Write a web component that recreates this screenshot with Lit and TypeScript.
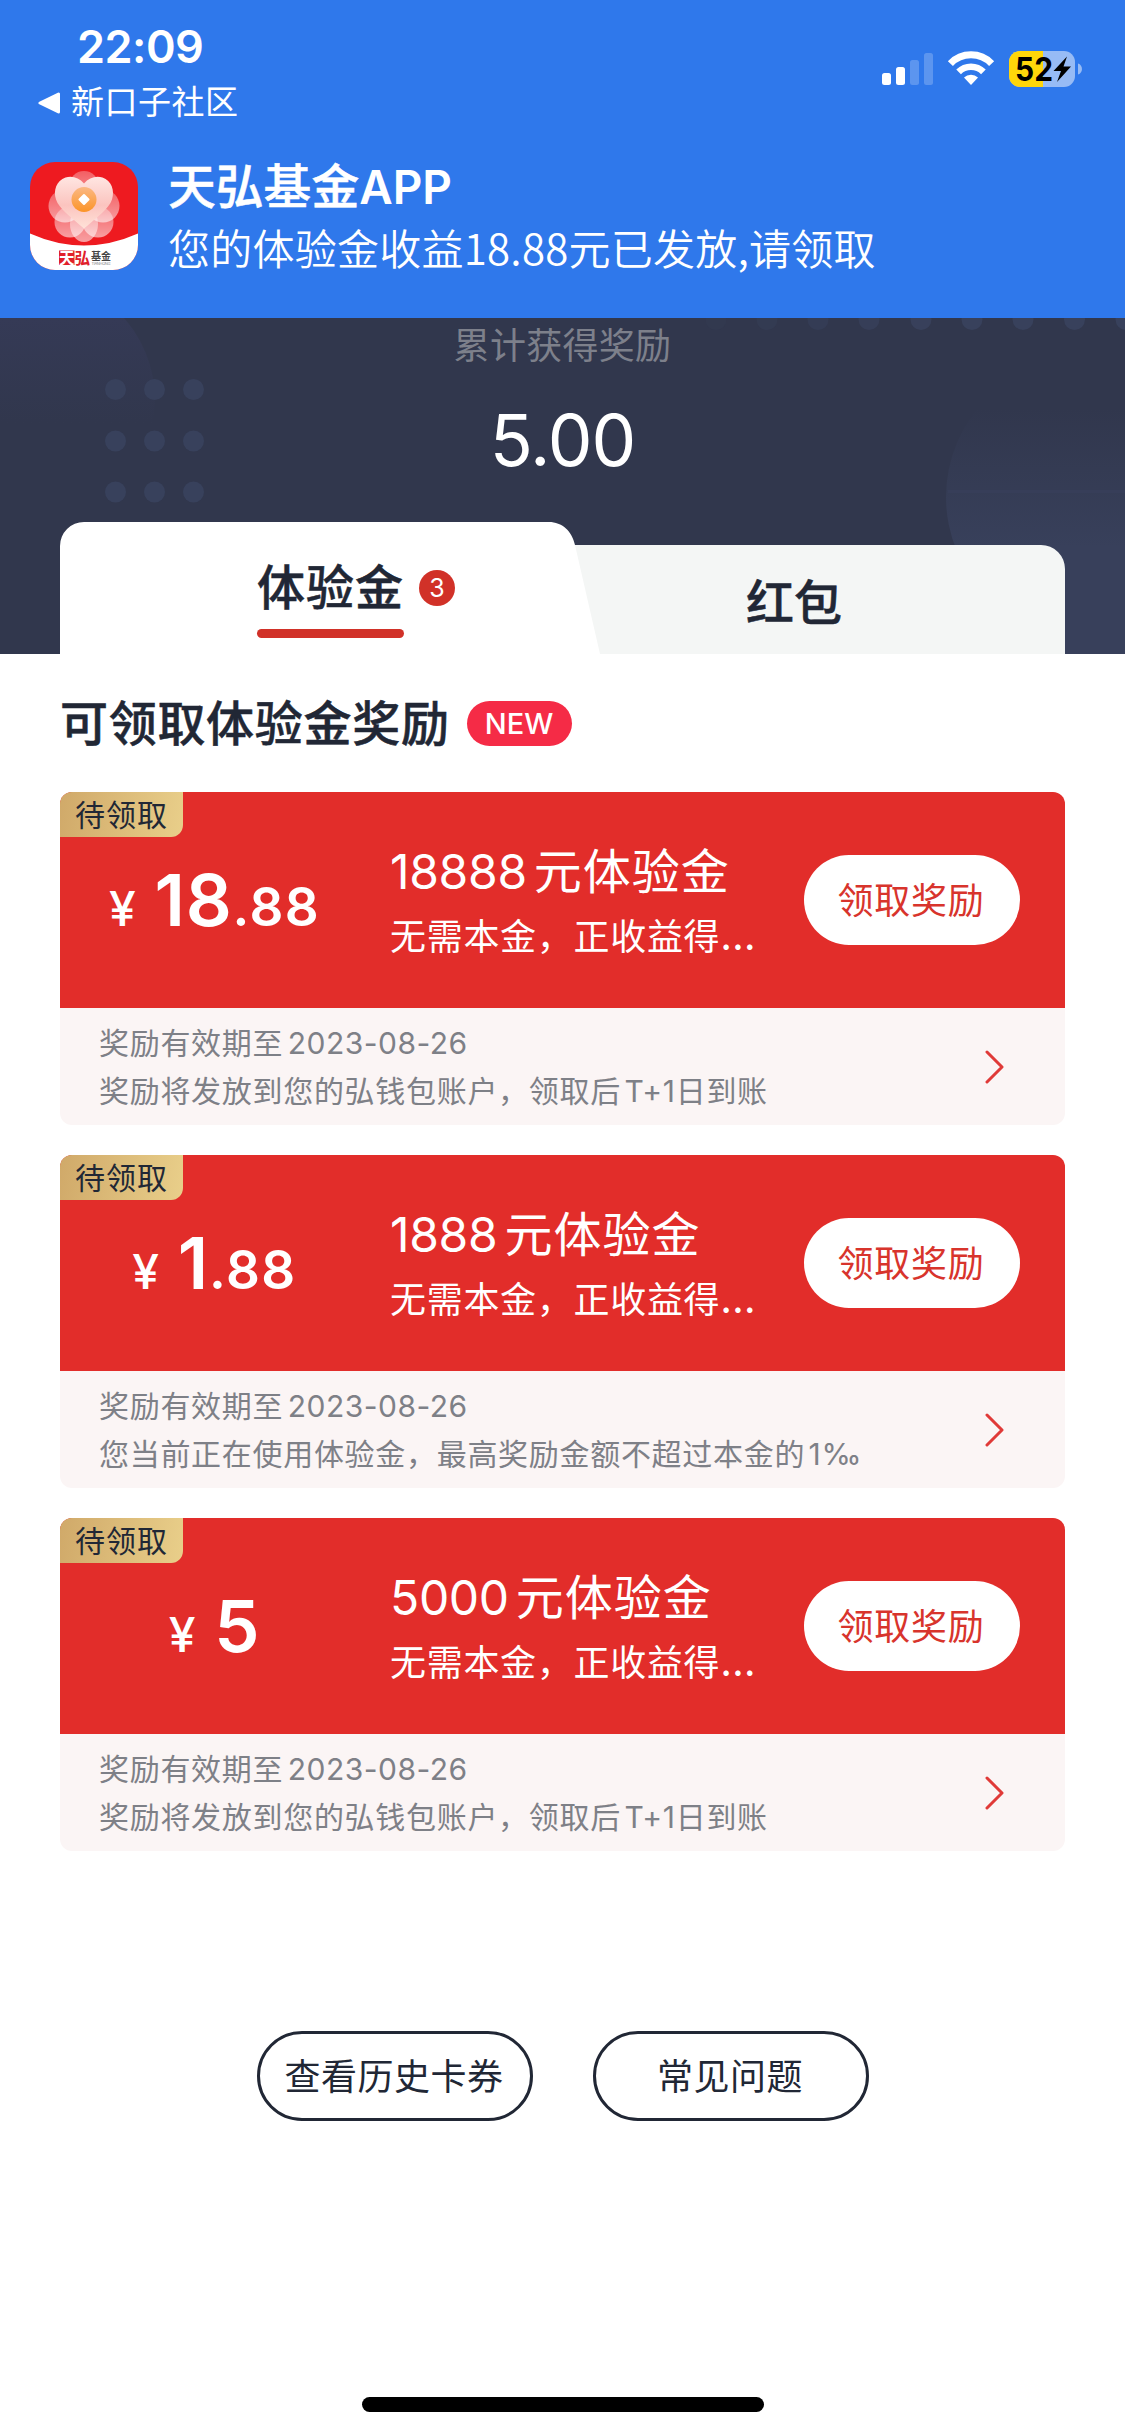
import { LitElement, html, css, svg } from "lit";
import { customElement, property } from "lit/decorators.js";

interface Reward {
  whole: string;
  cents: string;
  quota: string;
  note: unknown;
}

const NOTE_PAYOUT = html`奖励将发放到您的弘钱包账户，领取后<span class="latin">T+1</span>日到账`;
const NOTE_LIMIT = html`您当前正在使用体验金，最高奖励金额不超过本金的<span class="latin">1‰</span>`;

const REWARDS: Reward[] = [
  { whole: "18", cents: ".88", quota: "18888", note: NOTE_PAYOUT },
  { whole: "1", cents: ".88", quota: "1888", note: NOTE_LIMIT },
  { whole: "5", cents: "", quota: "5000", note: NOTE_PAYOUT },
];

@customElement("status-icons")
class StatusIcons extends LitElement {
  static styles = css`
    :host { display: block; width: 202px; height: 36px; }
    svg { display: block; overflow: visible; }
    .level { font: 700 33px "Inter", sans-serif; }
  `;
  render() {
    return html`
      <svg width="202" height="36" viewBox="0 0 202 36">
        <g fill="#fff">
          <rect x="0" y="22" width="9" height="12" rx="2.5" />
          <rect x="14" y="16" width="9" height="18" rx="2.5" />
          <rect x="28" y="9" width="9" height="25" rx="2.5" opacity=".22" />
          <rect x="42" y="2" width="9" height="32" rx="2.5" opacity=".22" />
        </g>
        <g fill="none" stroke="#fff">
          <path d="M68.4 12.6a28.6 28.6 0 0 1 41.2 0" stroke-width="7" />
          <path d="M76.6 20.8a17.6 17.6 0 0 1 24.8 0" stroke-width="6.6" />
        </g>
        <path d="M89 34l-7-7.4a10 10 0 0 1 14 0z" fill="#fff" />
        <rect x="127" y="0" width="66" height="36" rx="11" fill="#97bbf5" />
        <path d="M138 0h23v36h-23a11 11 0 0 1-11-11v-14a11 11 0 0 1 11-11z" fill="#ffd60a" />
        <path d="M196 12.5c5.3 1.500 5.3 9.500 0 11z" fill="#97bbf5" />
        <text class="level" x="133" y="30" textLength="38" lengthAdjust="spacingAndGlyphs">52</text>
        <path d="M185 5.500L171.500 20h7.500l-4 11L189 15.500h-7.500z" />
      </svg>
    `;
  }
}

@customElement("fund-logo")
class FundLogo extends LitElement {
  static styles = css`
    :host { display: block; width: 108px; height: 108px; border-radius: 25px; overflow: hidden; }
    svg { display: block; }
    .mark { font: 700 15.500px "Noto Sans CJK SC", sans-serif; }
    .name { font: 700 10px "Noto Sans CJK SC", sans-serif; }
    .tiny { font: 400 4px "Inter", sans-serif; }
  `;
  render() {
    const petals = [
      [54, 24, 15], [35, 44, 16.500], [73, 44, 16.500],
      [40, 60, 15.500], [68, 60, 15.500],
    ];
    return html`
      <svg width="108" height="108" viewBox="0 0 108 108">
        <defs>
          <linearGradient id="heart" x1="0" y1="0" x2="0" y2="1">
            <stop offset="0" stop-color="#ffe6e2" />
            <stop offset=".55" stop-color="#fbc4bf" />
            <stop offset="1" stop-color="#ffe2d8" />
          </linearGradient>
          <linearGradient id="coin" x1="0" y1="0" x2="0" y2="1">
            <stop offset="0" stop-color="#fbb884" />
            <stop offset="1" stop-color="#fb9428" />
          </linearGradient>
          <linearGradient id="petal" x1="0" y1="0" x2="0" y2="1">
            <stop offset="0" stop-color="#fff" stop-opacity=".3" />
            <stop offset="1" stop-color="#fff" stop-opacity=".58" />
          </linearGradient>
        </defs>
        <rect width="108" height="108" fill="#ee1a20" />
        ${petals.map(([x, y, r]) => svg`<circle cx=${x} cy=${y} r=${r} fill="url(#petal)" />`)}
        <ellipse cx="54" cy="62" rx="14" ry="18" fill="url(#petal)" />
        <path
          d="M54 21.500c5-6 12-8 18.500-6 9 3 12.500 13 9.500 22-3 9-15 18-28 29-13-11-25-20-28-29-3-9 .5-19 9.500-22 6.500-2 13.500 0 18.500 6z"
          fill="url(#heart)"
        />
        <circle cx="54" cy="37.500" r="12.500" fill="url(#coin)" />
        <rect x="49.800" y="33.300" width="8.400" height="8.400" rx="1" fill="#fff" transform="rotate(45 54 37.500)" />
        <path d="M0 71.500Q54 95.500 108 71.500V108H0z" fill="#fff" />
        <rect x="29" y="88.500" width="15.500" height="14.500" fill="#e0202a" />
        <text class="mark" x="29" y="101.500" fill="#fff">天</text>
        <text class="mark" x="44.500" y="101.500" fill="#e0202a">弘</text>
        <text class="name" x="61" y="97.500" fill="#444">基金</text>
        <text class="tiny" x="61.500" y="102.800" fill="#888" textLength="19">TIANHONG</text>
      </svg>
    `;
  }
}

@customElement("reward-card")
class RewardCard extends LitElement {
  @property({ attribute: false }) reward!: Reward;

  static styles = css`
    :host { display: block; border-radius: 12px; overflow: hidden; background: #fbf5f5; }
    .top {
      position: relative; display: flex; height: 216px; box-sizing: border-box;
      padding-right: 45px; background: #e22d2a; color: #fff;
    }
    .tag {
      position: absolute; left: 0; top: 0; width: 123px; height: 45px; box-sizing: border-box;
      padding-left: 15px; border-bottom-right-radius: 12px;
      background: linear-gradient(100deg, #d0a969, #e9cf8a);
      color: #212735; font-size: 30px; line-height: 46px; letter-spacing: 1px;
    }
    .amount {
      width: 307px; height: 216px; box-sizing: border-box; padding-left: 2px; line-height: 216px;
      text-align: center; font-size: 72px; font-weight: 600; white-space: nowrap; letter-spacing: .8px;
    }
    .yen, .cents { line-height: 0; }
    .yen { font-size: 48px; font-weight: 500; margin-right: 18px; }
    .cents { font-size: 53px; font-weight: 600; letter-spacing: 1.400px; }
    .about { flex: 1; padding: 50px 0 0 23px; white-space: nowrap; }
    .title { font-size: 48px; line-height: 60px; letter-spacing: 1px; }
    .quota { letter-spacing: -0.3px; margin-right: 7px; }
    .sub { margin-top: 10px; font-size: 36px; line-height: 50px; letter-spacing: .7px; }
    .dots { font-size: 41px; line-height: 0; }
    .claim {
      align-self: center; width: 216px; height: 90px; border: 0; border-radius: 45px; padding: 0 2px 4px 0;
      background: #fff; color: #d8342c; font: inherit; font-size: 36px; letter-spacing: .7px;
    }
    .bottom {
      display: flex; justify-content: space-between; height: 117px; box-sizing: border-box;
      padding: 11px 60px 0 39px; color: #7e8087; font-size: 30px; line-height: 48px;
      letter-spacing: .7px; white-space: nowrap;
    }
    .date, .latin { margin-left: 3.500px; }
    .date { margin-left: 4.500px; letter-spacing: .5px; }
    .arrow { margin-top: 31px; }
  `;

  render() {
    const r = this.reward;
    return html`
      <div class="top">
        <div class="tag">待领取</div>
        <div class="amount"><span class="yen">¥</span>${r.whole}<span class="cents">${r.cents}</span></div>
        <div class="about">
          <div class="title"><span class="quota">${r.quota}</span>元体验金</div>
          <div class="sub">无需本金，正收益得<span class="dots">…</span></div>
        </div>
        <button class="claim">领取奖励</button>
      </div>
      <div class="bottom">
        <div>
          <div>奖励有效期至<span class="date">2023-08-26</span></div>
          <div>${r.note}</div>
        </div>
        <svg class="arrow" width="20" height="34" viewBox="0 0 20 34">
          <path d="M2 2L17 17L2 32" fill="none" stroke="#e03a38" stroke-width="3" stroke-linecap="round" stroke-linejoin="round" />
        </svg>
      </div>
    `;
  }
}

@customElement("app-root")
class AppRoot extends LitElement {
  static styles = css`
    :host {
      display: flex; flex-direction: column; width: 1125px; height: 2436px; overflow: hidden;
      background: #fff; color: #212735;
      font-family: "Inter", "Noto Sans CJK SC", sans-serif;
    }
    .header { height: 318px; background: #2f78eb; color: #fff; }
    .status { display: flex; justify-content: space-between; height: 130px; }
    .clock { padding: 20px 0 0 77px; font-size: 45px; font-weight: 600; line-height: 54px; letter-spacing: -.5px; }
    .back { display: flex; align-items: center; gap: 10px; padding-left: 37px; font-size: 33px; line-height: 57px; letter-spacing: .5px; }
    .icons { padding: 51px 41px 0 0; }
    .notice { display: flex; gap: 30px; padding: 32px 0 0 30px; }
    .app { font-size: 46px; font-weight: 600; line-height: 51px; }
    .app-cjk { font-size: 47.800px; line-height: 0; font-weight: 500; -webkit-text-stroke: .5px currentColor; }
    .message { margin-top: 9px; font: 350 42px/50px "Noto Sans CJK SC", sans-serif; white-space: nowrap; letter-spacing: .25px; }

    .hero { position: relative; display: flex; flex-direction: column; height: 336px; background: #31374d; }
    .decor { position: absolute; left: 0; top: 0; }
    .total-label { position: relative; margin-top: 2px; text-align: center; font-size: 36px; line-height: 52px; color: #7d808b; letter-spacing: .3px; }
    .total { position: relative; margin-top: 20px; text-align: center; font-size: 71px; line-height: 96px; color: #fff; letter-spacing: -1px; }
    .tabs { position: relative; display: flex; align-items: flex-end; height: 132px; margin: auto 60px 0; }
    .tab-shape { position: absolute; left: 0; top: 0; }
    .tab { position: relative; font-size: 48px; font-weight: 500; }
    .tab-name, .tab-off, .heading-text { -webkit-text-stroke: .5px currentColor; }
    .tab-on { display: flex; align-items: flex-start; gap: 15px; width: 343px; height: 132px; padding-left: 197px; }
    .tab-name { padding-top: 36px; height: 80px; box-sizing: border-box; line-height: 60px; letter-spacing: 1px; }
    .underline { height: 9px; margin-top: 27px; border-radius: 5px; background: #d13128; }
    .count {
      width: 36px; height: 36px; margin-top: 48px; border-radius: 50%; background: #d13128; color: #fff;
      font-size: 25px; font-weight: 400; line-height: 36px; text-align: center;
    }
    .tab-off { flex: 1; height: 109px; line-height: 116px; padding-left: 146px; }

    .list { display: flex; flex-direction: column; gap: 30px; padding: 0 60px; }
    .heading { display: flex; align-items: center; gap: 17px; height: 138px; margin-bottom: -30px; font-size: 48px; font-weight: 500; letter-spacing: .7px; }
    .heading-text { padding-bottom: 7px; }
    .new {
      width: 105px; height: 45px; border-radius: 23px; background: #f52b46; color: #fff;
      font-size: 29px; font-weight: 500; line-height: 46px; text-align: center; letter-spacing: 0;
    }
    .links { display: flex; justify-content: center; gap: 60px; margin-top: 180px; }
    .link {
      width: 276px; height: 90px; border: 3px solid #212735; border-radius: 45px; padding: 0 1px 4px 0;
      background: none; color: #212735; font: inherit; font-size: 36px; letter-spacing: .5px;
    }
    .home { width: 402px; height: 15px; margin: auto auto 24px; border-radius: 8px; background: #000; }
  `;

  renderDecor() {
    const grid = [389.5, 441, 492].flatMap((y) => [115.5, 154.5, 193.5].map((x) => [x, y - 318]));
    const row = [716, 767, 818, 869, 921, 972, 1023, 1074.5, 1126];
    return html`
      <svg class="decor" width="1125" height="336" viewBox="0 0 1125 336">
        <defs>
          <linearGradient id="fade-down" x1="0" y1="0" x2="0" y2="105" gradientUnits="userSpaceOnUse">
            <stop offset="0" stop-color="#353a56" />
            <stop offset="1" stop-color="#353a56" stop-opacity="0" />
          </linearGradient>
          <linearGradient id="fade-up" x1="0" y1="90" x2="0" y2="230" gradientUnits="userSpaceOnUse">
            <stop offset="0" stop-color="#38405b" stop-opacity="0" />
            <stop offset="1" stop-color="#38405b" />
          </linearGradient>
        </defs>
        <circle cx="31" cy="82" r="124" fill="url(#fade-down)" />
        <circle cx="1086" cy="179" r="140" fill="url(#fade-up)" />
        <rect x="1040" y="227" width="85" height="109" fill="#38405b" />
        <rect x="948" y="172" width="177" height="3" fill="#38405b" opacity=".6" />
        <g fill="#38415c">
          ${grid.map(([x, y]) => svg`<circle cx=${x} cy=${y} r="10.500" />`)}
          ${row.map((x, i) => svg`<circle cx=${x} cy="1.500" r="10.500" opacity=${Math.min(1, 0.2 + i * 0.18)} />`)}
        </g>
      </svg>
    `;
  }

  render() {
    return html`
      <header class="header">
        <div class="status">
          <div>
            <div class="clock">22:09</div>
            <div class="back">
              <svg width="24" height="22" viewBox="0 0 24 22">
                <path d="M3 11L21.500 2V20z" fill="#fff" stroke="#fff" stroke-width="3" stroke-linejoin="round" />
              </svg>
              <span>新口子社区</span>
            </div>
          </div>
          <div class="icons"><status-icons></status-icons></div>
        </div>
        <div class="notice">
          <fund-logo></fund-logo>
          <div>
            <div class="app"><span class="app-cjk">天弘基金</span>APP</div>
            <div class="message">您的体验金收益18.88元已发放,请领取</div>
          </div>
        </div>
      </header>
      <section class="hero">
        ${this.renderDecor()}
        <div class="total-label">累计获得奖励</div>
        <div class="total">5.00</div>
        <div class="tabs">
          <svg class="tab-shape" width="1005" height="132" viewBox="0 0 1005 132">
            <path d="M480 23H981a24 24 0 0 1 24 24V132H480z" fill="#f4f6f5" />
            <path d="M0 132V24A24 24 0 0 1 24 0H489C502 0 512 9 515 23L540 132z" fill="#fff" />
          </svg>
          <div class="tab tab-on">
            <div>
              <div class="tab-name">体验金</div>
              <div class="underline"></div>
            </div>
            <div class="count">3</div>
          </div>
          <div class="tab tab-off"><span>红包</span></div>
        </div>
      </section>
      <main class="list">
        <div class="heading"><span class="heading-text">可领取体验金奖励</span><span class="new">NEW</span></div>
        ${REWARDS.map((r) => html`<reward-card .reward=${r}></reward-card>`)}
      </main>
      <div class="links">
        <button class="link">查看历史卡券</button>
        <button class="link">常见问题</button>
      </div>
      <div class="home"></div>
    `;
  }
}
